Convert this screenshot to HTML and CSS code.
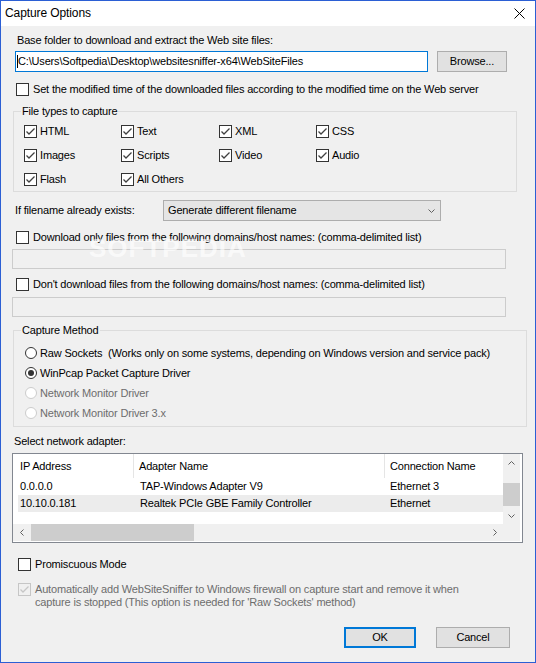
FILE: index.html
```html
<!DOCTYPE html>
<html lang="en">
<head>
    <meta charset="UTF-8">
    <title>Capture Options</title>
    <link rel="stylesheet" href="styles.css">
</head>
<body>
    <div class="window">
        <div class="titlebar">
            <span class="title">Capture Options</span>
            <svg class="close" viewBox="0 0 11 11"><path d="M0.5 0.5 L10.5 10.5 M10.5 0.5 L0.5 10.5" stroke="#000" stroke-width="1" fill="none"/></svg>
        </div>

        <div class="label base-label">Base folder to download and extract the Web site files:</div>
        <div class="path-row">
            <div class="edit focused"><span class="caret"></span>C:\Users\Softpedia\Desktop\websitesniffer-x64\WebSiteFiles</div>
            <div class="button browse">Browse...</div>
        </div>

        <div class="check mod-time"><span class="box"></span>Set the modified time of the downloaded files according to the modified time on the Web server</div>

        <div class="group types">
            <div class="group-title">File types to capture</div>
            <div class="type-grid">
                <div class="check"><span class="box"><svg viewBox="0 0 11 11"><path d="M1.5 5.5 L4 8 L9.5 2.5" /></svg></span>HTML</div>
                <div class="check"><span class="box"><svg viewBox="0 0 11 11"><path d="M1.5 5.5 L4 8 L9.5 2.5" /></svg></span>Text</div>
                <div class="check"><span class="box"><svg viewBox="0 0 11 11"><path d="M1.5 5.5 L4 8 L9.5 2.5" /></svg></span>XML</div>
                <div class="check"><span class="box"><svg viewBox="0 0 11 11"><path d="M1.5 5.5 L4 8 L9.5 2.5" /></svg></span>CSS</div>
                <div class="check"><span class="box"><svg viewBox="0 0 11 11"><path d="M1.5 5.5 L4 8 L9.5 2.5" /></svg></span>Images</div>
                <div class="check"><span class="box"><svg viewBox="0 0 11 11"><path d="M1.5 5.5 L4 8 L9.5 2.5" /></svg></span>Scripts</div>
                <div class="check"><span class="box"><svg viewBox="0 0 11 11"><path d="M1.5 5.5 L4 8 L9.5 2.5" /></svg></span>Video</div>
                <div class="check"><span class="box"><svg viewBox="0 0 11 11"><path d="M1.5 5.5 L4 8 L9.5 2.5" /></svg></span>Audio</div>
                <div class="check"><span class="box"><svg viewBox="0 0 11 11"><path d="M1.5 5.5 L4 8 L9.5 2.5" /></svg></span>Flash</div>
                <div class="check"><span class="box"><svg viewBox="0 0 11 11"><path d="M1.5 5.5 L4 8 L9.5 2.5" /></svg></span>All Others</div>
            </div>
        </div>

        <div class="filename-row">
            <span class="filename-label">If filename already exists:</span>
            <div class="select">
                <span>Generate different filename</span>
                <svg class="chevron" viewBox="0 0 7 4"><path d="M0.5 0.5 L3.5 3.5 L6.5 0.5" /></svg>
            </div>
        </div>

        <div class="check only-domains"><span class="box"></span>Download only files from the following domains/host names: (comma-delimited list)</div>
        <div class="edit disabled domains-edit"></div>

        <div class="check skip-domains"><span class="box"></span>Don't download files from the following domains/host names: (comma-delimited list)</div>
        <div class="edit disabled domains-edit skip-edit"></div>

        <div class="group method">
            <div class="group-title">Capture Method</div>
            <div class="radio-list">
                <div class="option"><span class="radio"></span>Raw Sockets&nbsp; (Works only on some systems, depending on Windows version and service pack)</div>
                <div class="option"><span class="radio on"></span>WinPcap Packet Capture Driver</div>
                <div class="option off"><span class="radio"></span>Network Monitor Driver</div>
                <div class="option off"><span class="radio"></span>Network Monitor Driver 3.x</div>
            </div>
        </div>

        <div class="label adapter-label">Select network adapter:</div>
        <div class="list">
            <div class="list-main">
                <div class="list-head">
                    <span>IP Address</span>
                    <span>Adapter Name</span>
                    <span>Connection Name</span>
                </div>
                <div class="list-row">
                    <span>0.0.0.0</span>
                    <span>TAP-Windows Adapter V9</span>
                    <span>Ethernet 3</span>
                </div>
                <div class="list-row selected">
                    <span>10.10.0.181</span>
                    <span>Realtek PCIe GBE Family Controller</span>
                    <span>Ethernet</span>
                </div>
            </div>
            <div class="vscroll">
                <div class="arrow"><svg viewBox="0 0 7 4"><path d="M0.5 3.5 L3.5 0.5 L6.5 3.5" /></svg></div>
                <div class="vtrack"><div class="vthumb"></div></div>
                <div class="arrow"><svg viewBox="0 0 7 4"><path d="M0.5 0.5 L3.5 3.5 L6.5 0.5" /></svg></div>
            </div>
            <div class="hscroll">
                <div class="arrow"><svg class="side" viewBox="0 0 4 7"><path d="M3.5 0.5 L0.5 3.5 L3.5 6.5" /></svg></div>
                <div class="htrack"><div class="hthumb"></div></div>
                <div class="arrow"><svg class="side" viewBox="0 0 4 7"><path d="M0.5 0.5 L3.5 3.5 L0.5 6.5" /></svg></div>
            </div>
            <div class="corner"></div>
        </div>

        <div class="check promiscuous"><span class="box"></span>Promiscuous Mode</div>

        <div class="check firewall off">
            <span class="box"><svg viewBox="0 0 11 11"><path d="M1.5 5.5 L4 8 L9.5 2.5" /></svg></span>
            <span>Automatically add WebSiteSniffer to Windows firewall on capture start and remove it when<br>capture is stopped (This option is needed for 'Raw Sockets' method)</span>
        </div>

        <div class="actions">
            <div class="button default">OK</div>
            <div class="button cancel">Cancel</div>
        </div>

        <div class="watermark">SOFTPEDIA</div>
    </div>
</body>
</html>
```

FILE: styles.css
```css
body {
    margin: 0;
    background: #f0f0f0;
}
.window {
    position: relative;
    width: 536px;
    height: 663px;
    box-sizing: border-box;
    border: 1px solid #2b5fd4;
    background: #f0f0f0;
    font-family: 'Liberation Sans', Arial, sans-serif;
    font-size: 11px;
    line-height: 13px;
    letter-spacing: -0.17px;
    color: #000;
    overflow: hidden;
}
.titlebar {
    height: 25px;
    background: #fff;
    display: flex;
    align-items: center;
    justify-content: space-between;
    padding: 0 10px 0 4px;
    font-size: 12px;
    letter-spacing: -0.1px;
}
.close {
    width: 11px;
    height: 11px;
}

/* generic controls */
.label {
    height: 13px;
}
.edit {
    box-sizing: border-box;
    height: 20px;
    border: 1px solid #ccc;
    background: #f0f0f0;
}
.edit.focused {
    width: 413px;
    height: 21px;
    border-color: #0078d7;
    background: #fff;
    display: flex;
    align-items: center;
    padding-left: 1px;
}
.caret {
    width: 1px;
    height: 13px;
    background: #000;
}
.button {
    box-sizing: border-box;
    height: 21px;
    border: 1px solid #adadad;
    background: #e1e1e1;
    display: flex;
    align-items: center;
    justify-content: center;
}
.button.default {
    border: 2px solid #0078d7;
}
.check {
    display: flex;
    align-items: center;
    height: 13px;
}
.box {
    flex: none;
    width: 13px;
    height: 13px;
    box-sizing: border-box;
    border: 1px solid #333;
    background: #fff;
    margin-right: 4px;
    display: flex;
    align-items: center;
    justify-content: center;
}
.box svg {
    width: 11px;
    height: 11px;
}
.box path {
    fill: none;
    stroke: #404040;
    stroke-width: 1.3;
}
.check.off {
    color: #6d6d6d;
}
.check.off .box {
    border-color: #c6c6c6;
    background: #f0f0f0;
}
.check.off .box path {
    stroke: #c6c6c6;
}

/* group boxes */
.group {
    border: 1px solid #dcdcdc;
}
.group-title {
    width: fit-content;
    margin: -7px 0 0 7px;
    padding: 0 1px;
    background: #f0f0f0;
    height: 13px;
}

/* rows, top to bottom */
.base-label {
    margin: 8px 0 0 16px;
}
.path-row {
    display: flex;
    gap: 9px;
    margin: 4px 0 0 14px;
}
.browse {
    width: 70px;
}
.mod-time {
    margin: 11px 0 0 15px;
}
.types {
    width: 504px;
    box-sizing: border-box;
    margin: 15px 0 0 12px;
}
.type-grid {
    display: grid;
    grid-template-columns: 97px 98px 97px auto;
    grid-auto-rows: 24px;
    padding: 1px 0 0 10px;
}
.type-grid .check {
    height: 24px;
}
.type-grid .box {
    margin-right: 3px;
}
.filename-row {
    display: flex;
    align-items: center;
    height: 21px;
    margin: 8px 0 0 14px;
}
.filename-label {
    width: 148px;
}
.select {
    box-sizing: border-box;
    width: 278px;
    height: 21px;
    border: 1px solid #adadad;
    background: #e5e5e5;
    display: flex;
    align-items: center;
    justify-content: space-between;
    padding: 0 5px 0 4px;
}
.chevron {
    width: 7px;
    height: 4px;
}
.chevron path,
.arrow path {
    fill: none;
    stroke: #606060;
    stroke-width: 1;
}
.only-domains {
    margin: 10px 0 0 15px;
}
.domains-edit {
    width: 494px;
    margin: 5px 0 0 11px;
}
.skip-domains {
    margin: 9px 0 0 15px;
}
.skip-edit {
    margin-top: 6px;
}
.method {
    width: 514px;
    box-sizing: border-box;
    margin: 13px 0 0 12px;
}
.radio-list {
    padding: 6px 0 3px 11px;
}
.option {
    display: flex;
    align-items: center;
    height: 20px;
}
.option.off {
    color: #6d6d6d;
}
.radio {
    flex: none;
    width: 12px;
    height: 12px;
    box-sizing: border-box;
    border: 1px solid #333;
    border-radius: 50%;
    background: #fff;
    margin-right: 3px;
    display: flex;
    align-items: center;
    justify-content: center;
}
.radio.on::after {
    content: '';
    width: 6px;
    height: 6px;
    border-radius: 50%;
    background: #333;
}
.option.off .radio {
    border-color: #cccccc;
}
.adapter-label {
    margin: 8px 0 0 13px;
}

/* adapter list */
.list {
    width: 511px;
    height: 90px;
    box-sizing: border-box;
    margin: 5px 0 0 11px;
    border: 1px solid #828790;
    background: #fff;
    padding: 0 2px 1px 0;
    display: grid;
    grid-template-columns: 1fr 17px;
    grid-template-rows: 70px 17px;
}
.list-head {
    display: grid;
    grid-template-columns: 121px 251px 1fr;
    height: 24px;
    align-items: stretch;
}
.list-head span {
    display: flex;
    align-items: center;
    padding-left: 5px;
    border-right: 1px solid #e5e5e5;
}
.list-head span:first-child {
    padding-left: 7px;
}
.list-head span:last-child {
    border-right: none;
}
.list-row {
    display: grid;
    grid-template-columns: 116px 251px 1fr;
    height: 17px;
    align-items: center;
    margin-left: 5px;
}
.list-row span {
    padding-left: 6px;
    white-space: nowrap;
}
.list-row span:first-child {
    padding-left: 2px;
}
.list-row span:last-child {
    padding-left: 5px;
}
.list-row.selected {
    background: #ececec;
}
.vscroll {
    background: #f0f0f0;
    display: flex;
    flex-direction: column;
}
.arrow {
    flex: none;
    width: 17px;
    height: 17px;
    display: flex;
    align-items: center;
    justify-content: center;
}
.arrow svg {
    width: 7px;
    height: 4px;
}
.arrow svg.side {
    width: 4px;
    height: 7px;
}
.vtrack {
    flex: 1;
}
.vthumb {
    width: 17px;
    height: 23px;
    margin-top: 12px;
    background: #cdcdcd;
}
.hscroll {
    background: #f0f0f0;
    display: flex;
}
.htrack {
    flex: 1;
    display: flex;
    align-items: stretch;
}
.hthumb {
    width: 163px;
    margin-left: 1px;
    background: #cdcdcd;
}
.corner {
    background: #f0f0f0;
}

.promiscuous {
    margin: 15px 0 0 17px;
}
.firewall {
    align-items: flex-start;
    height: auto;
    margin: 12px 0 0 17px;
}
.actions {
    display: flex;
    justify-content: flex-end;
    gap: 20px;
    margin-top: 18px;
    padding-right: 25px;
}
.actions .default {
    width: 72px;
}
.actions .cancel {
    width: 74px;
}

/* faint site watermark over the form */
.watermark {
    position: absolute;
    left: 88px;
    top: 234px;
    font-size: 26px;
    line-height: 26px;
    font-weight: bold;
    letter-spacing: 1px;
    color: rgba(255, 255, 255, 0.65);
    pointer-events: none;
}
```
